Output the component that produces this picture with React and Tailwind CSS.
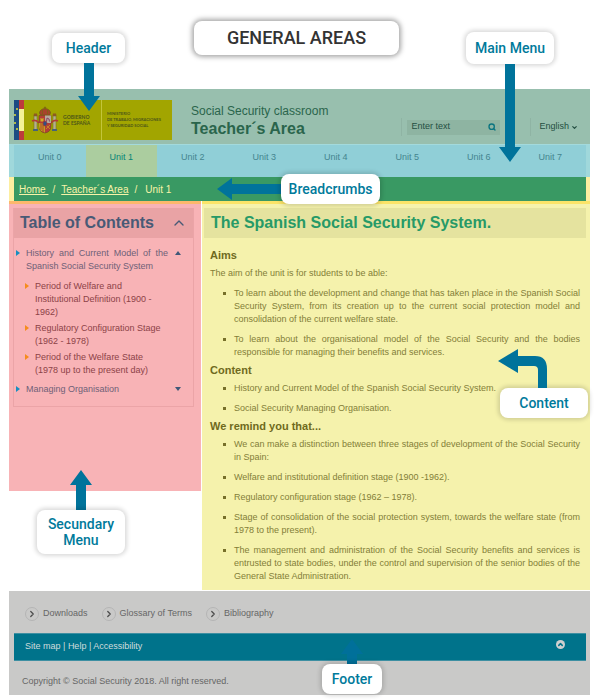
import { ChevronDown, ChevronRight, ChevronUp, Search } from 'lucide-react'

const UNITS = ['Unit 0', 'Unit 1', 'Unit 2', 'Unit 3', 'Unit 4', 'Unit 5', 'Unit 6', 'Unit 7']

const STAGES = [
  'Period of Welfare and Institutional Definition (1900 - 1962)',
  'Regulatory Configuration Stage (1962 - 1978)',
  'Period of the Welfare State (1978 up to the present day)',
]

const AIMS = [
  'To learn about the development and change that has taken place in the Spanish Social Security System, from its creation up to the current social protection model and consolidation of the current welfare state.',
  'To learn about the organisational model of the Social Security and the bodies responsible for managing their benefits and services.',
]

const CONTENTS = [
  'History and Current Model of the Spanish Social Security System.',
  'Social Security Managing Organisation.',
]

const REMINDERS = [
  'We can make a distinction between three stages of development of the Social Security in Spain:',
  'Welfare and institutional definition stage (1900 -1962).',
  'Regulatory configuration stage (1962 – 1978).',
  'Stage of consolidation of the social protection system, towards the welfare state (from 1978 to the present).',
  'The management and administration of the Social Security benefits and services is entrusted to state bodies, under the control and supervision of the senior bodies of the General State Administration.',
]

const FOOTER_LINKS = ['Downloads', 'Glossary of Terms', 'Bibliography']

function Label({ children, className = '' }) {
  return (
    <div
      className={`rounded-lg bg-white text-center font-[Roboto,sans-serif] text-sm leading-4 font-medium text-[#007a9b] shadow-[0_0_4px_2px_rgba(0,0,0,0.15)] ${className}`}
    >
      {children}
    </div>
  )
}

function VerticalArrow({ length, up = false, color = '#00739b' }) {
  const points = up
    ? `11,0 22,15 16,15 16,${length} 6,${length} 6,15 0,15`
    : `6,0 16,0 16,${length - 15} 22,${length - 15} 11,${length} 0,${length - 15} 6,${length - 15}`
  return (
    <svg width="22" height={length} className="block" aria-hidden="true">
      <polygon points={points} fill={color} />
    </svg>
  )
}

function CoatOfArms() {
  return (
    <svg width="28" height="28" viewBox="0 0 28 28" className="shrink-0" aria-hidden="true">
      <path d="M8.500 7 Q9 3 14 2.500 Q19 3 19.500 7 L18.500 9 H9.500 Z" fill="#a8432c" stroke="#6d5a16" strokeWidth="0.7" />
      <path d="M14 0.5 V4 M12.8 1.5 H15.2 M11.5 4 V8 M16.5 4 V8" stroke="#7c6514" strokeWidth="0.8" />
      <rect x="3" y="10" width="3" height="14" fill="#b5b08a" stroke="#6b6428" strokeWidth="0.5" />
      <rect x="22" y="10" width="3" height="14" fill="#b5b08a" stroke="#6b6428" strokeWidth="0.5" />
      <path d="M2.5 10 L3 7.5 H6 L6.5 10 Z M21.5 10 L22 7.5 H25 L25.5 10 Z" fill="#8d5b21" />
      <path d="M1 15 Q5 13 8 17 M27 15 Q23 13 20 17" fill="none" stroke="#b23a34" strokeWidth="1.6" />
      <path d="M2 24 H7 M21 24 H26" stroke="#46627a" strokeWidth="2" />
      <path d="M8 9.500 H20 V20 Q20 26 14 27 Q8 26 8 20 Z" fill="#b33d38" stroke="#6c4b22" strokeWidth="0.6" />
      <path d="M14 9.500 H20 V17 H14 Z" fill="#b7a99d" />
      <path d="M8 17 H14 V26.500 Q8 25 8 20 Z" fill="#c59f20" />
      <path d="M10 17 V24 M12 17 V26" stroke="#ad352e" strokeWidth="0.9" />
      <path d="M9.500 15.500 V12 H10.500 V13 H11.500 V12 H12.500 V15.500 Z" fill="#d0ae25" />
      <path d="M15.500 15.500 L16 12 L18 13 L18.500 15.500" fill="none" stroke="#8a4369" strokeWidth="1" />
      <path d="M15 19 L19 23 M19 19 L15 23" stroke="#d0a01e" strokeWidth="0.7" />
      <ellipse cx="14" cy="17.500" rx="2" ry="2.500" fill="#344f83" stroke="#a4342e" strokeWidth="0.7" />
    </svg>
  )
}

function GovernmentLogo() {
  return (
    <div className="flex h-10 w-[158px] shrink-0 bg-[#a2a500] font-[Lato,sans-serif] leading-[6px] font-bold text-[#4c5518]">
      <svg width="10" height="40" className="shrink-0" aria-hidden="true">
        <rect width="5" height="40" fill="#1d4b83" />
        <rect x="5" width="5" height="40" fill="#f4f295" />
        <rect x="5" width="5" height="9" fill="#bd3a3c" />
        <rect x="5" y="31" width="5" height="9" fill="#bd3a3c" />
        <g fill="#e2dc3a">
          <circle cx="3" cy="9" r="1" />
          <circle cx="1" cy="15" r="1" />
          <circle cx="1" cy="23" r="1" />
          <circle cx="3" cy="29" r="1" />
        </g>
      </svg>
      <div className="flex w-[78px] shrink-0 items-center gap-1 border-r border-[#c3c53a] pl-[7px] text-[5px]">
        <CoatOfArms />
        <p className="whitespace-nowrap">GOBIERNO<br />DE ESPAÑA</p>
      </div>
      <p className="self-center pl-[5px] text-[4px] whitespace-nowrap">
        MINISTERIO<br />DE TRABAJO, MIGRACIONES<br />Y SEGURIDAD SOCIAL
      </p>
    </div>
  )
}

function Header() {
  return (
    <header className="relative flex h-[55px] items-start bg-[#98bfae] pt-[11px] pr-3 pl-[5px]">
      <GovernmentLogo />
      <div className="ml-[19px] pt-[3px] text-[#2a654c]">
        <p className="text-xs leading-4 whitespace-nowrap">Social Security classroom</p>
        <p className="text-base leading-5 font-bold whitespace-nowrap">Teacher´s Area</p>
      </div>
      <div className="mt-[18px] ml-auto flex items-center text-[9px] text-[#244f42]">
        <div className="flex h-[18px] items-center border-l border-[#8fb4a4] px-[5px]">
          <label className="flex h-[15px] w-[93px] items-center bg-[#8eb4a2] pr-1 pl-1">
            <input type="search" aria-label="Search" placeholder="Enter text" className="w-full min-w-0 bg-transparent outline-none placeholder:text-[#244f42]" />
            <Search size={8} strokeWidth={4} className="shrink-0 text-[#0b7580]" />
          </label>
        </div>
        <button type="button" className="ml-[25px] flex h-[18px] items-center gap-[2px] border-l border-[#8fb4a4] pl-2">
          English <ChevronDown size={7} strokeWidth={4} />
        </button>
      </div>
      <div className="absolute -top-14 left-[43px] z-10 flex flex-col items-center">
        <Label className="w-[73px] py-[7px]">Header</Label>
        <VerticalArrow length={48} />
      </div>
    </header>
  )
}

function MainMenu() {
  return (
    <nav aria-label="Main menu" className="relative border-t border-[#a3dadc] bg-[#a0d8db] pr-1 pl-[5px]">
      <ul className="grid grid-cols-8 bg-[#90cfd7] text-center text-[9px] leading-6 text-[#44858f]">
        {UNITS.map(unit => (
          <li key={unit} className={unit === 'Unit 1' ? 'bg-[#abcd9f] text-[#078477]' : ''}>
            <a href="#" className="block h-8">{unit}</a>
          </li>
        ))}
      </ul>
      <div className="absolute -top-[113px] right-9 z-10 flex flex-col items-center">
        <Label className="w-[88px] py-2">Main Menu</Label>
        <VerticalArrow length={98} />
      </div>
    </nav>
  )
}

function Breadcrumbs() {
  return (
    <nav aria-label="Breadcrumbs" className="relative bg-[#fdeea0] pr-1 pl-[5px]">
      <ol className="flex h-6 items-center bg-[#399963] pl-[5px] text-[10px] text-[#f7f3a8]">
        <li><a href="#" className="underline">Home&nbsp;</a></li>
        <li className="ml-1">/</li>
        <li className="ml-1.5"><a href="#" className="underline">Teacher´s Area</a></li>
        <li className="ml-1.5">/</li>
        <li className="ml-2">Unit 1</li>
      </ol>
      <div className="absolute -top-[3px] left-[208px] z-10 flex items-center">
        <svg width="64" height="22" aria-hidden="true">
          <polygon points="0,11 15,0 15,6 64,6 64,16 15,16 15,22" fill="#00739b" />
        </svg>
        <Label className="w-[99px] py-[7px]">Breadcrumbs</Label>
      </div>
    </nav>
  )
}

function Marker({ className }) {
  return (
    <svg width="4" height="6" className={`mt-[3px] shrink-0 ${className}`} aria-hidden="true">
      <polygon points="0,0 4,3 0,6" fill="currentColor" />
    </svg>
  )
}

function Toggle({ open = false, label }) {
  return (
    <button type="button" aria-label={label} aria-expanded={open} className="mt-1 ml-[7px] shrink-0">
      <svg width="6" height="5" className="block" aria-hidden="true">
        <polygon points={open ? '0,4 3,0 6,4' : '0,0 3,4 6,0'} fill="#3f5878" />
      </svg>
    </button>
  )
}

function SecondaryMenu() {
  return (
    <aside className="relative w-[192px] shrink-0 border-t-[3px] border-[#fdb86c] bg-[#f8b3b6] px-1 pt-1 pb-[84px]">
      <div className="mr-[3px] border border-t-0 border-[#eba4a7]">
        <div className="flex h-[30px] items-center justify-between bg-[#e9a3a5] pr-1.5 pl-1.5 text-[#485a76]">
          <h2 className="text-base font-bold">Table of Contents</h2>
          <button type="button" aria-label="Collapse contents"><ChevronUp size={16} /></button>
        </div>
        <ul className="pt-[9px] pr-3 pb-2.5 pl-0.5 text-[9px] leading-[13px] text-[#6f5f76]">
          <li>
            <div className="flex items-start">
              <Marker className="text-[#178fc0]" />
              <a href="#" className="ml-1.5 flex-1 text-justify">History and Current Model of the Spanish Social Security System</a>
              <Toggle open label="Collapse section" />
            </div>
            <ul className="flex flex-col gap-[3px] pt-[7px] pr-3 pb-1.5 pl-[9px] text-[#8c4247]">
              {STAGES.map(stage => (
                <li key={stage} className="flex items-start">
                  <Marker className="text-[#f58c1c]" />
                  <a href="#" className="ml-1.5 w-[130px]">{stage}</a>
                </li>
              ))}
            </ul>
          </li>
          <li className="flex items-start">
            <Marker className="text-[#178fc0]" />
            <a href="#" className="ml-1.5 flex-1">Managing Organisation</a>
            <Toggle label="Expand section" />
          </li>
        </ul>
      </div>
      <div className="absolute -bottom-[63px] left-7 z-10 flex flex-col items-center">
        <VerticalArrow length={40} up />
        <Label className="w-[88px] py-1.5">Secundary Menu</Label>
      </div>
    </aside>
  )
}

function BulletList({ items }) {
  return (
    <ul className="flex flex-col gap-[7px] pl-[13px]">
      {items.map(item => (
        <li key={item} className="flex">
          <span className="mt-[5px] mr-2 h-[3px] w-[3px] shrink-0 bg-[#77702a]" />
          <span className="flex-1 text-justify">{item}</span>
        </li>
      ))}
    </ul>
  )
}

function Content() {
  return (
    <main className="relative min-w-0 flex-1 border-t-[3px] border-[#fbe468] bg-[#f5f2ac] pt-1 pb-[7px] pl-0.5">
      <h1 className="mr-1 flex h-[30px] items-center bg-[#e5e39f] pl-[7px] text-base font-bold text-[#279a67]">
        The Spanish Social Security System.
      </h1>
      <div className="pt-2.5 pr-2.5 pl-1.5 text-[9px] leading-[13px] text-[#837e38]">
        <h2 className="mb-[5px] text-[11px] leading-[14px] font-bold text-[#6f6a20]">Aims</h2>
        <p className="mb-[7px]">The aim of the unit is for students to be able:</p>
        <BulletList items={AIMS} />
        <h2 className="mt-1 mb-[5px] text-[11px] leading-[14px] font-bold text-[#6f6a20]">Content</h2>
        <BulletList items={CONTENTS} />
        <h2 className="mt-1 mb-[5px] text-[11px] leading-[14px] font-bold text-[#6f6a20]">We remind you that...</h2>
        <BulletList items={REMINDERS} />
      </div>
      <div className="absolute top-[145px] right-0.5 z-10">
        <svg width="52" height="39" className="-ml-0.5 block" aria-hidden="true">
          <path d="M0 12 L20 0 V7 H37 Q49 7 49 20 V39 H40 V21 Q40 17 36 17 H20 V24 Z" fill="#00739b" />
        </svg>
        <Label className="w-[88px] py-[7px]">Content</Label>
      </div>
    </main>
  )
}

function Footer() {
  return (
    <footer className="relative mt-px bg-[#c9c9c8] pr-1 pl-[5px] text-[9px] text-[#666]">
      <ul className="flex h-[42px] items-center gap-3.5 pt-1 pl-[11px]">
        {FOOTER_LINKS.map(link => (
          <li key={link}>
            <a href="#" className="flex items-center gap-1">
              <span className="flex h-[14px] w-[14px] items-center justify-center rounded-full border border-[#b5b5b5]">
                <ChevronRight size={10} strokeWidth={3} className="text-[#4d4d4d]" />
              </span>
              {link}
            </a>
          </li>
        ))}
      </ul>
      <div className="flex h-7 items-center border-y border-[#3d8fa2] bg-[#00738b] pr-[21px] pl-[11px] text-[#d0dcdc]">
        <p><a href="#">Site map</a> | <a href="#">Help</a> | <a href="#">Accessibility</a></p>
        <button type="button" aria-label="Back to top" className="mb-1.5 ml-auto flex h-[9px] w-[9px] items-center justify-center rounded-full bg-[#cfcfcf]">
          <ChevronUp size={7} strokeWidth={5} className="text-[#00738b]" />
        </button>
      </div>
      <p className="pt-3.5 pb-[7px] pl-2 leading-[13px]">Copyright © Social Security 2018. All right reserved.</p>
      <div className="absolute bottom-px left-[313px] z-10 flex flex-col items-center">
        <VerticalArrow length={25} up color="#00709a" />
        <Label className="w-[60px] py-[7px]">Footer</Label>
      </div>
    </footer>
  )
}

export default function App() {
  return (
    <div className="bg-white pr-2.5 pb-1.5 pl-[9px] font-['Liberation_Sans',Arial,sans-serif]">
      <div className="flex h-[89px] items-start justify-center pt-[21px] pr-1.5">
        <h1 className="rounded-lg bg-white px-[33px] py-[7px] font-[Roboto,sans-serif] text-lg leading-5 font-medium text-[#333] shadow-[0_0_5px_2px_rgba(0,0,0,0.35)]">
          GENERAL AREAS
        </h1>
      </div>
      <Header />
      <MainMenu />
      <Breadcrumbs />
      <div className="flex items-start gap-px">
        <SecondaryMenu />
        <Content />
      </div>
      <Footer />
    </div>
  )
}
